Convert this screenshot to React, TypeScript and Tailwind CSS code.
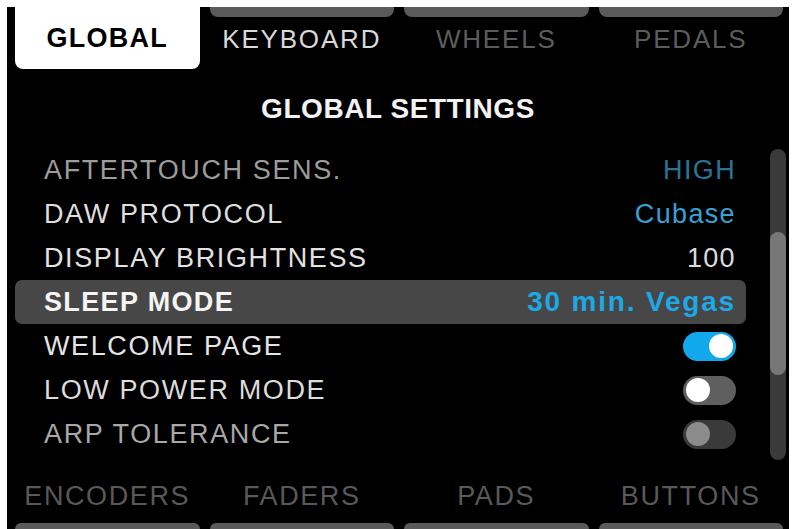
import React from 'react';

const font = { fontFamily: '"Liberation Sans", Arial, sans-serif' };

type Row = {
  label: string;
  value?: string;
  toggle?: 'on' | 'off' | 'dim';
  valueClass?: string;
  labelClass?: string;
  selected?: boolean;
};

const rows: Row[] = [
  { label: 'AFTERTOUCH SENS.', value: 'HIGH', labelClass: 'text-[#9c9c9c]', valueClass: 'text-[#2a7398]' },
  { label: 'DAW PROTOCOL', value: 'Cubase', labelClass: 'text-[#dedede]', valueClass: 'text-[#3aa0d2]' },
  { label: 'DISPLAY BRIGHTNESS', value: '100', labelClass: 'text-[#e2e2e2]', valueClass: 'text-[#dcdcdc]' },
  { label: 'SLEEP MODE', value: '30 min. Vegas', selected: true },
  { label: 'WELCOME PAGE', toggle: 'on', labelClass: 'text-[#e4e4e4]' },
  { label: 'LOW POWER MODE', toggle: 'off', labelClass: 'text-[#dcdcdc]' },
  { label: 'ARP TOLERANCE', toggle: 'dim', labelClass: 'text-[#a8a8a8]' },
];

function Toggle({ state }: { state: 'on' | 'off' | 'dim' }) {
  const track = state === 'on' ? 'bg-[#12a8ec] justify-end' : state === 'off' ? 'bg-[#5f5f5f] justify-start' : 'bg-[#3a3a3a] justify-start';
  const knob = state === 'dim' ? 'bg-[#8c8c8c]' : 'bg-white';
  return (
    <div className={`flex h-[29px] w-[53px] items-center rounded-full px-[3px] ${track}`}>
      <div className={`h-[24px] w-[24px] rounded-full ${knob}`} />
    </div>
  );
}

function TopTab({ label, active, dim }: { label: string; active?: boolean; dim?: boolean }) {
  if (active) {
    return (
      <div className="flex h-[62px] items-center justify-center rounded-b-[8px] bg-white">
        <span className="text-[27px] font-bold tracking-[0.045em] text-black">{label}</span>
      </div>
    );
  }
  return (
    <div className="flex h-[62px] flex-col">
      <div className="h-[10px] rounded-b-[8px] bg-[#5a5a5a]" />
      <div className="flex flex-1 items-center justify-center pb-[8px]">
        <span className={`text-[26px] tracking-[0.07em] ${dim ? 'text-[#5c5c5c]' : 'text-[#d9d9d9]'}`}>{label}</span>
      </div>
    </div>
  );
}

function BottomTab({ label }: { label: string }) {
  return (
    <div className="flex h-[69px] flex-col">
      <div className="flex flex-1 items-center justify-center pt-[9px]">
        <span className="text-[27px] tracking-[0.06em] text-[#595959]">{label}</span>
      </div>
      <div className="h-[6px] rounded-t-[8px] bg-[#5a5a5a]" />
    </div>
  );
}

export default function App() {
  return (
    <div className="h-[529px] w-[793px] overflow-hidden bg-white pl-[7px] pr-[4px] pt-[7px]" style={font}>
      <div className="flex h-full flex-col bg-black">
        <div className="grid grid-cols-4 gap-[10px] pl-[8px] pr-[6px]">
          <TopTab label="GLOBAL" active />
          <TopTab label="KEYBOARD" />
          <TopTab label="WHEELS" dim />
          <TopTab label="PEDALS" dim />
        </div>

        <div className="flex h-[79px] items-center justify-center">
          <span className="text-[28px] font-bold tracking-[0.02em] text-[#f2f2f2]">GLOBAL SETTINGS</span>
        </div>

        <div className="flex h-[312px] pl-[8px] pr-[3px]">
          <div className="flex w-[731px] flex-col">
            {rows.map((r) => (
              <div
                key={r.label}
                className={`flex h-[44px] items-center justify-between pl-[29px] pr-[10px] ${r.selected ? 'rounded-[7px] bg-[#474747]' : ''}`}
              >
                <span
                  className={`text-[27px] ${r.selected ? 'font-bold tracking-[0.05em] text-[#f4f4f4]' : `tracking-[0.06em] ${r.labelClass}`}`}
                >
                  {r.label}
                </span>
                {r.toggle ? (
                  <Toggle state={r.toggle} />
                ) : (
                  <span
                    className={`${r.selected ? 'text-[28px] font-bold tracking-[0.065em] text-[#1ea8e6]' : `text-[27px] tracking-[0.05em] ${r.valueClass}`}`}
                  >
                    {r.value}
                  </span>
                )}
              </div>
            ))}
          </div>
          <div className="ml-[24px] flex w-[16px] flex-col">
            <div className="mt-[1px] flex h-[311px] flex-col rounded-full bg-[#3a3a3a]">
              <div className="mt-[83px] h-[143px] rounded-full bg-[#777777]" />
            </div>
          </div>
        </div>

        <div className="grid grid-cols-4 gap-[10px] pl-[8px] pr-[6px]">
          <BottomTab label="ENCODERS" />
          <BottomTab label="FADERS" />
          <BottomTab label="PADS" />
          <BottomTab label="BUTTONS" />
        </div>
      </div>
    </div>
  );
}
